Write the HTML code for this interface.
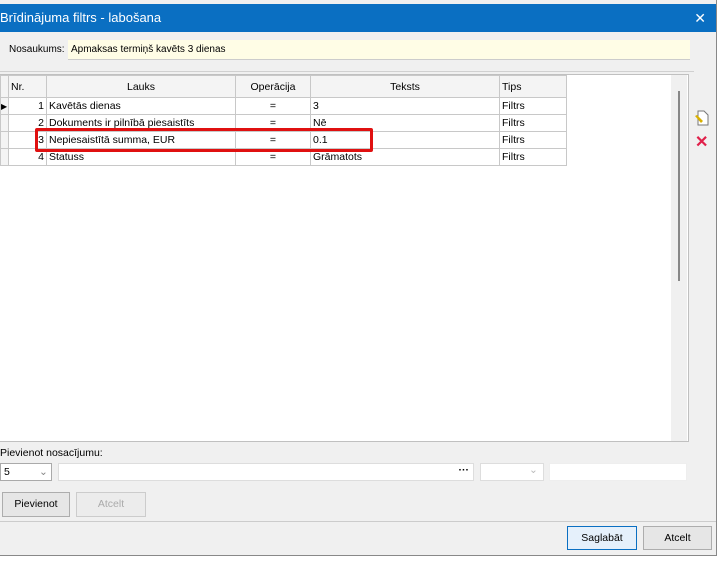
<!DOCTYPE html>
<html><head><meta charset="utf-8"><style>
*{box-sizing:border-box;margin:0;padding:0}
body{width:720px;height:563px;background:#fff;font-family:"Liberation Sans",sans-serif;font-size:10.5px;color:#000;position:relative;overflow:hidden}
.win{position:absolute;left:0;top:0;width:717px;height:556px;background:#f0f0f0;border-right:1px solid #888;border-bottom:1px solid #888}
.title{position:absolute;left:0;top:4px;width:716px;height:28px;background:#0a6fc2;color:#fff;font-size:13px;line-height:28px;padding-left:0}
.close{position:absolute;right:10px;top:0;font-size:14px}
.abs{position:absolute}
table{border-collapse:collapse;position:absolute;left:0;top:75px}
td,th{border:1px solid #c8c8c8;height:17px;font-weight:normal;padding:0 2px;white-space:nowrap;font-size:10.5px}
th{background:#f4f4f4;height:22px;text-align:center}
.btn{position:absolute;border:1px solid #adadad;background:#e6e6e6;text-align:center;line-height:22px;font-size:10.5px}
.inp{position:absolute;background:#fff;border:1px solid #ddd;height:18px}
</style></head><body>
<div class="win">
<div class="title">Brīdinājuma filtrs - labošana<span class="close">✕</span></div>
<div class="abs" style="left:9px;top:44px;font-size:10px">Nosaukums:</div>
<div class="abs" style="left:68px;top:40px;width:622px;height:20px;background:#fffde6;border-bottom:1px solid #ccc;padding:4px 3px;font-size:10px">Apmaksas termiņš kavēts 3 dienas</div>
<div class="abs" style="left:0;top:71px;width:694px;height:1px;background:#d0d0d0"></div>
<div class="abs" style="left:0;top:74px;width:689px;height:368px;background:#fff;border:1px solid #c0c0c0;border-left:none"></div>
<div class="abs" style="left:671px;top:75px;width:16px;height:366px;background:#f0f0f0"></div>
<div class="abs" style="left:678px;top:91px;width:2px;height:190px;background:#888"></div>
<table>
<tr><th style="width:8px"></th><th style="width:38px;text-align:left">Nr.</th><th style="width:189px">Lauks</th><th style="width:75px">Operācija</th><th style="width:189px">Teksts</th><th style="width:67px;text-align:left">Tips</th></tr>
<tr><td style="background:#f4f4f4;font-size:8px;padding:0">▶</td><td style="text-align:right">1</td><td>Kavētās dienas</td><td style="text-align:center">=</td><td>3</td><td>Filtrs</td></tr>
<tr><td style="background:#f4f4f4"></td><td style="text-align:right">2</td><td>Dokuments ir pilnībā piesaistīts</td><td style="text-align:center">=</td><td>Nē</td><td>Filtrs</td></tr>
<tr><td style="background:#f4f4f4"></td><td style="text-align:right">3</td><td>Nepiesaistītā summa, EUR</td><td style="text-align:center">=</td><td>0.1</td><td>Filtrs</td></tr>
<tr><td style="background:#f4f4f4"></td><td style="text-align:right">4</td><td>Statuss</td><td style="text-align:center">=</td><td>Grāmatots</td><td>Filtrs</td></tr>
</table>
<div class="abs" style="left:35px;top:128px;width:338px;height:24px;border:3px solid #e01010;border-radius:2px"></div>
<svg class="abs" style="left:694px;top:110px" width="16" height="16"><path d="M4 1h6l4 4v10H4z" fill="#fff" stroke="#777"/><path d="M1 6l6 7 2-2-6-6z" fill="#d9b000"/></svg>
<div class="abs" style="left:695px;top:132px;color:#e0204a;font-size:16px;font-weight:bold">✕</div>
<div class="abs" style="left:0;top:447px">Pievienot nosacījumu:</div>
<div class="inp" style="left:0;top:463px;width:52px;padding:2px 3px;border-color:#aaa">5<span style="position:absolute;left:38px;color:#888">⌄</span></div>
<div class="inp" style="left:58px;top:463px;width:416px"><span style="position:absolute;right:4px;top:0;font-weight:bold">···</span></div>
<div class="inp" style="left:480px;top:463px;width:64px"><span style="position:absolute;left:48px;color:#bbb">⌄</span></div>
<div class="inp" style="left:549px;top:463px;width:138px;border-color:#eee"></div>
<div class="btn" style="left:2px;top:492px;width:68px;height:25px">Pievienot</div>
<div class="btn" style="left:76px;top:492px;width:70px;height:25px;color:#aaa;background:#ececec;border-color:#ccc">Atcelt</div>
<div class="abs" style="left:0;top:521px;width:716px;height:1px;background:#ccc"></div>
<div class="btn" style="left:567px;top:526px;width:70px;height:24px;border-color:#0a6fc2;background:#e5f0fb">Saglabāt</div>
<div class="btn" style="left:643px;top:526px;width:69px;height:24px">Atcelt</div>
</div>
</body></html>
